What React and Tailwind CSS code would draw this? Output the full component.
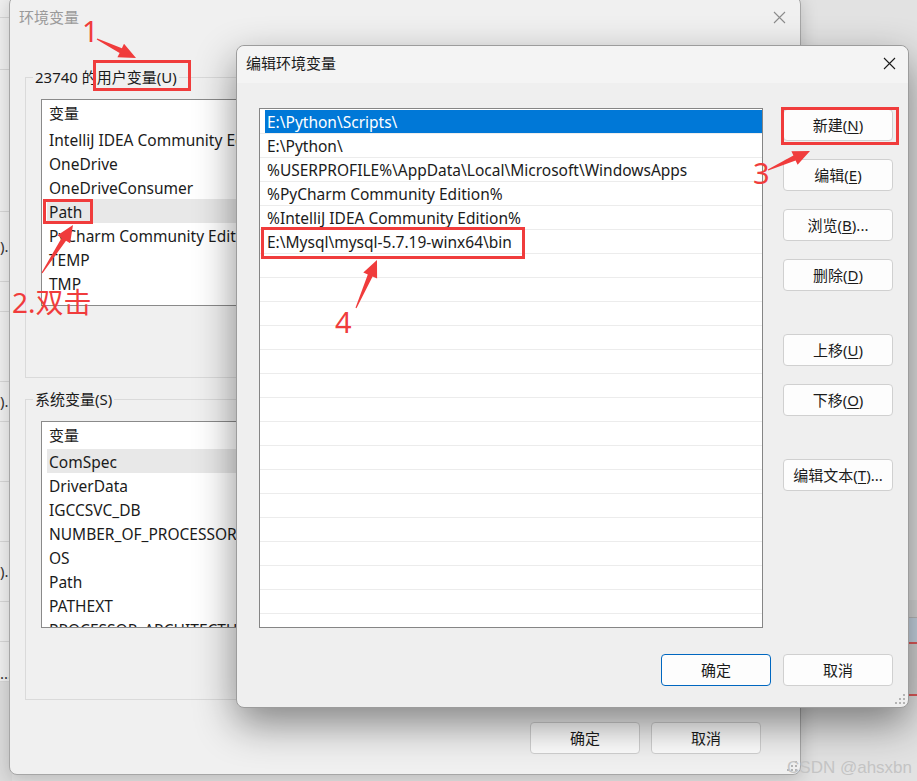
import React from 'react';

const RED = '#f03c3c';

// tapering screenshot-style arrow, tail -> tip
function arrowPoints(tx, ty, px, py, head = 17, wing = 7.5, shaft = 2.6) {
  const dx = px - tx;
  const dy = py - ty;
  const len = Math.hypot(dx, dy);
  const ux = dx / len;
  const uy = dy / len;
  const nx = -uy;
  const ny = ux;
  const bx = px - ux * head;
  const by = py - uy * head;
  const pts = [
    [tx + nx * 0.6, ty + ny * 0.6],
    [bx + nx * shaft, by + ny * shaft],
    [bx + nx * wing, by + ny * wing],
    [px, py],
    [bx - nx * wing, by - ny * wing],
    [bx - nx * shaft, by - ny * shaft],
    [tx - nx * 0.6, ty - ny * 0.6],
  ];
  return pts.map((p) => p.map((v) => v.toFixed(1)).join(',')).join(' ');
}

function CloseX({ color }) {
  return (
    <svg width="13" height="13" viewBox="0 0 13 13">
      <path d="M1 1 L12 12 M12 1 L1 12" stroke={color} strokeWidth="1.1" fill="none" />
    </svg>
  );
}

function Grip() {
  return (
    <svg width="10" height="10" viewBox="0 0 10 10">
      {[[8, 0], [4, 4], [8, 4], [0, 8], [4, 8], [8, 8]].map(([x, y]) => (
        <rect key={`${x}-${y}`} x={x} y={y} width="2" height="2" fill="#b4b4b4" />
      ))}
    </svg>
  );
}

function Btn({ children, primary = false }) {
  return (
    <div
      className={`flex h-[32px] w-[110px] shrink-0 items-center justify-center rounded-[4px] border bg-[#fdfdfd] text-[15px] text-[#1b1b1b] ${
        primary ? 'border-[#0067c0]' : 'border-[#d0d0d0]'
      }`}
    >
      {children}
    </div>
  );
}

function Acc({ children }) {
  return <span className="underline underline-offset-2">{children}</span>;
}

const userVars = ['IntelliJ IDEA Community Edition', 'OneDrive', 'OneDriveConsumer', 'Path', 'PyCharm Community Edition', 'TEMP', 'TMP'];
const sysVars = ['ComSpec', 'DriverData', 'IGCCSVC_DB', 'NUMBER_OF_PROCESSORS', 'OS', 'Path', 'PATHEXT', 'PROCESSOR_ARCHITECTURE'];

const pathRows = [
  'E:\\Python\\Scripts\\',
  'E:\\Python\\',
  '%USERPROFILE%\\AppData\\Local\\Microsoft\\WindowsApps',
  '%PyCharm Community Edition%',
  '%IntelliJ IDEA Community Edition%',
  'E:\\Mysql\\mysql-5.7.19-winx64\\bin',
];

function VarList({ items, highlight }) {
  return (
    <div className="ml-[15px] mt-[21px] h-[207px] w-[740px] overflow-hidden border border-[#8a8a8a] bg-white">
      <div className="flex h-[27px] items-center pl-[7px] text-[15px] text-[#1b1b1b]">变量</div>
      {items.map((name) => (
        <div
          key={name}
          className={`ml-[5px] flex h-[24px] items-center whitespace-nowrap pl-[2px] pt-[2px] text-[15.5px] leading-[22px] text-[#1b1b1b] ${
            name === highlight ? 'bg-[#e8e8e8]' : ''
          }`}
        >
          {name}
        </div>
      ))}
    </div>
  );
}

function Group({ label, className = '', children }) {
  return (
    <div className={`relative ml-[15px] h-[301px] w-[760px] border border-[#dadada] ${className}`}>
      <div className="absolute -top-[11px] left-[7px] bg-[#f0f0f0] px-[2px] text-[15px] leading-[20px] text-[#1b1b1b]">
        {label}
      </div>
      {children}
    </div>
  );
}

export default function App() {
  const emptyRows = Array.from({ length: 16 }, (_, i) => i);

  return (
    <div className="relative h-[781px] w-[917px] overflow-hidden bg-[#e2e2e2] font-['Noto_Sans','Noto_Sans_CJK_SC',sans-serif]">
      {/* window behind, left edge */}
      <div className="absolute left-0 top-0 flex h-full w-[12px] flex-col bg-[#efefef] text-[15px] leading-none text-[#333]">
        <div className="h-[18px] border-b border-[#d6d6d6]" />
        <div className="h-[52px] border-b border-[#d6d6d6]" />
        <div className="h-[142px] border-b border-[#d6d6d6]" />
        <div className="flex h-[70px] items-center border-b border-[#d6d6d6] pl-0">).</div>
        <div className="h-[30px] border-b border-[#d6d6d6]" />
        <div className="h-[70px] border-b border-[#d6d6d6]" />
        <div className="flex h-[40px] items-center border-b border-[#d6d6d6]">).</div>
        <div className="h-[60px] border-b border-[#d6d6d6]" />
        <div className="h-[60px] border-b border-[#d6d6d6]" />
        <div className="flex h-[60px] items-center border-b border-[#d6d6d6]">).</div>
        <div className="h-[40px] border-b border-[#d6d6d6]" />
        <div className="flex h-[40px] items-end border-b border-[#d6d6d6]">...</div>
        <div className="flex-1 bg-[#dcdcdc]" />
      </div>

      {/* window behind, right edge */}
      <div className="absolute right-0 top-[600px] flex h-[110px] w-[8px] flex-col">
        <div className="h-[18px] border-b border-[#bdbdbd] bg-[#dadada]" />
        <div className="h-[26px] border-b-2 border-[#e05a5a] bg-[#c9d7e4]" />
        <div className="h-[52px] border-b-2 border-[#e05a5a] bg-[#d5d5d5]" />
      </div>

      {/* 环境变量 dialog (inactive, behind) */}
      <div className="absolute left-[9px] top-[-4px] flex h-[779px] w-[792px] flex-col rounded-lg border border-[#a6a6a6] bg-[#f0f0f0] shadow-[0_4px_18px_rgba(0,0,0,0.18)]">
        <div className="flex h-[40px] shrink-0 items-center justify-between pl-[9px] pr-[14px]">
          <span className="text-[15px] text-[#9a9a9a]">环境变量</span>
          <CloseX color="#8c8c8c" />
        </div>

        <Group label="23740 的用户变量(U)" className="mt-[40px]">
          <VarList items={userVars} highlight="Path" />
        </Group>

        <Group label="系统变量(S)" className="mt-[21px]">
          <VarList items={sysVars} highlight="ComSpec" />
        </Group>

        <div className="mt-[22px] flex justify-end gap-[11px] pr-[39px]">
          <Btn>确定</Btn>
          <Btn>取消</Btn>
        </div>

        <div className="absolute bottom-[3px] right-[3px]">
          <Grip />
        </div>
      </div>

      {/* 编辑环境变量 dialog (active) */}
      <div className="absolute left-[236px] top-[45px] flex h-[663px] w-[673px] flex-col rounded-lg border border-[#9c9c9c] bg-[#efefef] shadow-[0_16px_40px_rgba(0,0,0,0.45)]">
        <div className="flex h-[37px] shrink-0 items-start justify-between rounded-t-lg bg-[#f4f4f4] pl-[9px] pr-[12px] pt-[7px]">
          <span className="text-[15px] leading-[20px] text-[#1b1b1b]">编辑环境变量</span>
          <span className="pt-[4px]">
            <CloseX color="#1b1b1b" />
          </span>
        </div>

        <div className="mt-[25px] flex items-start">
          <div className="ml-[22px] h-[520px] w-[504px] shrink-0 overflow-hidden border border-[#858585] bg-white pt-[1px]">
            {pathRows.map((row, i) => (
              <div key={row} className="h-[24px] border-b border-[#ececec]">
                <div
                  className={`ml-[5px] flex h-full items-center whitespace-nowrap pl-[2px] pt-[1px] text-[15.5px] leading-[22px] ${
                    i === 0 ? 'bg-[#0078d7] text-white' : 'text-[#1b1b1b]'
                  }`}
                >
                  {row}
                </div>
              </div>
            ))}
            {emptyRows.map((i) => (
              <div key={i} className="h-[24px] border-b border-[#ececec]" />
            ))}
          </div>

          <div className="ml-[20px] mt-[1px] flex flex-col">
            <Btn>
              新建(<Acc>N</Acc>)
            </Btn>
            <div className="mt-[18px]">
              <Btn>
                编辑(<Acc>E</Acc>)
              </Btn>
            </div>
            <div className="mt-[18px]">
              <Btn>
                浏览(<Acc>B</Acc>)...
              </Btn>
            </div>
            <div className="mt-[18px]">
              <Btn>
                删除(<Acc>D</Acc>)
              </Btn>
            </div>
            <div className="mt-[43px]">
              <Btn>
                上移(<Acc>U</Acc>)
              </Btn>
            </div>
            <div className="mt-[18px]">
              <Btn>
                下移(<Acc>O</Acc>)
              </Btn>
            </div>
            <div className="mt-[43px]">
              <Btn>
                编辑文本(<Acc>T</Acc>)...
              </Btn>
            </div>
          </div>
        </div>

        <div className="mt-[26px] flex justify-end gap-[12px] pr-[15px]">
          <Btn primary>确定</Btn>
          <Btn>取消</Btn>
        </div>

        <div className="absolute bottom-[3px] right-[3px]">
          <Grip />
        </div>
      </div>

      {/* annotations */}
      <div className="absolute left-[93px] top-[60px] h-[31px] w-[98px] border-[3px] border-[#f03c3c]" />
      <div className="absolute left-[43px] top-[199px] h-[25px] w-[50px] border-[3px] border-[#f03c3c]" />
      <div className="absolute left-[781px] top-[107px] h-[38px] w-[118px] border-[3px] border-[#f03c3c]" />
      <div className="absolute left-[261px] top-[227px] h-[32px] w-[264px] border-[3px] border-[#f03c3c]" />

      <svg className="pointer-events-none absolute inset-0" width="917" height="781">
        <polygon points={arrowPoints(97, 39, 136, 58)} fill={RED} />
        <polygon points={arrowPoints(42, 273, 73, 225)} fill={RED} />
        <polygon points={arrowPoints(768, 170, 810, 151)} fill={RED} />
        <polygon points={arrowPoints(356, 308, 377, 260)} fill={RED} />
      </svg>

      <div className="absolute left-[82px] top-[16px] text-[29px] leading-none text-[#f03c3c]">1</div>
      <div className="absolute left-[12px] top-[288px] text-[28px] leading-none text-[#f03c3c]">2.双击</div>
      <div className="absolute left-[753px] top-[158px] text-[29px] leading-none text-[#f03c3c]">3</div>
      <div className="absolute left-[335px] top-[307px] text-[29px] leading-none text-[#f03c3c]">4</div>

      <div className="absolute bottom-[5px] right-[5px] font-['Liberation_Sans',sans-serif] text-[17px] leading-none text-[#c4c4c4]">
        CSDN @ahsxbn
      </div>
    </div>
  );
}
